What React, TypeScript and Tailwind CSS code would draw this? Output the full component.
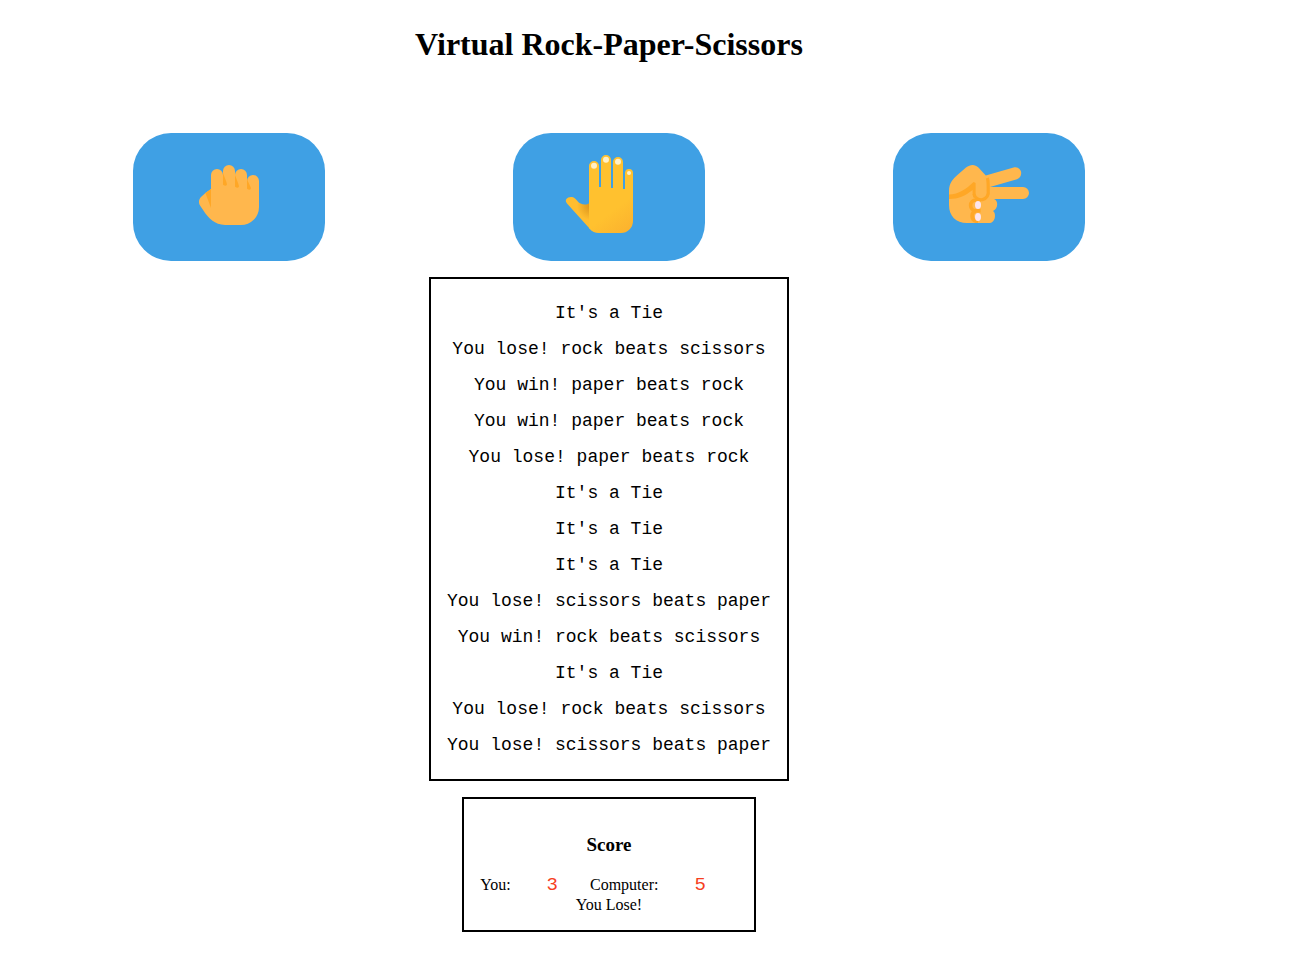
import type { ReactNode } from "react";

const results = [
  "It's a Tie",
  "You lose! rock beats scissors",
  "You win! paper beats rock",
  "You win! paper beats rock",
  "You lose! paper beats rock",
  "It's a Tie",
  "It's a Tie",
  "It's a Tie",
  "You lose! scissors beats paper",
  "You win! rock beats scissors",
  "It's a Tie",
  "You lose! rock beats scissors",
  "You lose! scissors beats paper",
];

function RockIcon() {
  return (
    <svg viewBox="0 0 48 48" className="size-24" aria-hidden="true">
      <path
        fill="#FFB74D"
        d="M15 20V13a3 3 0 0 1 6 0V11a3 3 0 0 1 6 0V13a3 3 0 0 1 6 0V16a3 3 0 0 1 6 0V29a9 9 0 0 1-9 9H22C17 38 13.500 34.500 11.200 30.800L9.600 28.400C8.600 26.900 8.900 25.200 10 24L12.200 22Z"
      />
      <path
        fill="#FFA726"
        d="M15 20L12.200 22L15 29.500ZM21 12V17a1 1 0 0 0 2 .6C22.700 16 21.700 14 21 12ZM27 13V18a1 1 0 0 0 2 .6C28.700 17 27.700 15 27 13ZM33 15V19a1 1 0 0 0 2 .6C34.700 18.500 33.700 17 33 15Z"
      />
    </svg>
  );
}

function PaperIcon() {
  return (
    <svg viewBox="0 0 48 48" className="size-24" aria-hidden="true">
      <defs>
        <linearGradient id="palm" x1="18" y1="18" x2="36" y2="42" gradientUnits="userSpaceOnUse">
          <stop offset="0.5" stopColor="#FFC12F" />
          <stop offset="1" stopColor="#FBB02E" />
        </linearGradient>
        <radialGradient id="thumb" cx="15" cy="28.500" r="7" gradientUnits="userSpaceOnUse">
          <stop offset="0" stopColor="#D9931C" />
          <stop offset="1" stopColor="#FFBD2F" />
        </radialGradient>
      </defs>
      <path
        fill="url(#thumb)"
        d="M15 26C14 28 11.500 28.200 9.800 27.300C8.700 26.700 8.200 25.700 7 24.700C5.500 23.600 3.500 24 2.700 25C2.200 25.700 2.400 26.500 3 27.200L14.500 40L19 36Z"
      />
      <path
        fill="url(#palm)"
        d="M14 30V8.500a2.500 2.500 0 0 1 5 0V19H20V5.500a2.500 2.500 0 0 1 5 0V19.500H26V6.500a2.500 2.500 0 0 1 5 0V20H32V12a2 2 0 0 1 4 0V36a6 6 0 0 1-6 6H19C17 42 15.500 41.200 14.400 40L14 39.500Z"
      />
      <g fill="#FFF0C8">
        <circle cx="16.500" cy="8.400" r="1.500" />
        <circle cx="22.500" cy="5.400" r="1.500" />
        <circle cx="28.500" cy="6.400" r="1.500" />
        <circle cx="34" cy="12" r="1" />
      </g>
    </svg>
  );
}

function ScissorsIcon() {
  return (
    <svg viewBox="0 0 48 48" className="size-24" aria-hidden="true">
      <path
        fill="#FFB74D"
        d="M4 21C4 17 6 15 8.200 13L12.500 9.300C14.700 7.500 17 7.500 18.700 9.300L22.400 13.200L36.300 9.200C38 8.700 39.600 9.700 40 11.300C40.400 13 39.500 14.600 38 15.100L24.500 19H41a3 3 0 0 1 0 6H26.500C28.800 25.800 28.600 30 26 31C27.500 31.600 27.500 36.500 24.500 37H13C7.500 37 4 33.500 4 28Z"
      />
      <path
        fill="#FFA726"
        d="M4 22.800C9 22.700 12.500 20 16.300 16.500L17.300 17V22.500L16.500 24.500C15.800 23.800 15.800 22.500 15.800 20.500C12 23.500 8.800 25 4 25Z"
      />
      <path
        fill="none"
        stroke="#FFA726"
        strokeWidth="1.600"
        d="M23.200 14.500C23.700 16 23.600 17 23.600 21A3.500 3.500 0 0 1 16.500 22.500"
      />
      <path
        fill="none"
        stroke="#FFA726"
        strokeWidth="1.800"
        d="M19.800 25.500H17.500A2.600 2.600 0 0 0 17.500 30.900H19.800M17.500 30.900A2.700 2.700 0 0 0 17.500 36.100H18.500"
      />
      <g fill="#FCE4EC">
        <ellipse cx="18.500" cy="28" rx="1.500" ry="2" />
        <ellipse cx="18.500" cy="34" rx="1.500" ry="2" />
      </g>
    </svg>
  );
}

function Choice({ label, children }: { label: string; children: ReactNode }) {
  return (
    <button
      type="button"
      aria-label={label}
      className="flex h-32 w-48 cursor-pointer items-center justify-center rounded-[38px] bg-[#3fa0e4]"
    >
      {children}
    </button>
  );
}

function Points({ children }: { children: ReactNode }) {
  return (
    <span className="px-8 font-['Liberation_Mono',monospace] text-[19px] leading-5 text-[#f63e20]">
      {children}
    </span>
  );
}

export default function App() {
  return (
    <main className="flex flex-col items-center bg-white pt-6 pr-[73px] pb-6 font-['Liberation_Serif',serif] text-base text-black">
      <h1 className="text-[32px] leading-10 font-bold">Virtual Rock-Paper-Scissors</h1>

      <div className="mt-[69px] grid w-full grid-cols-3 justify-items-center px-[39px]">
        <Choice label="Rock">
          <RockIcon />
        </Choice>
        <Choice label="Paper">
          <PaperIcon />
        </Choice>
        <Choice label="Scissors">
          <ScissorsIcon />
        </Choice>
      </div>

      <section
        aria-label="Results"
        className="mt-4 border-2 border-black p-4 text-center font-['Liberation_Mono',monospace] text-lg leading-9"
      >
        {results.map((result, i) => (
          <p key={i}>{result}</p>
        ))}
      </section>

      <section className="mt-4 border-2 border-black px-4 pt-9 pb-[15px] text-center leading-5">
        <h3 className="mb-5 text-[19px] leading-5 font-bold">Score</h3>
        <p>
          You: <Points>3</Points>Computer: <Points>5</Points>
        </p>
        <p>You Lose!</p>
      </section>
    </main>
  );
}
